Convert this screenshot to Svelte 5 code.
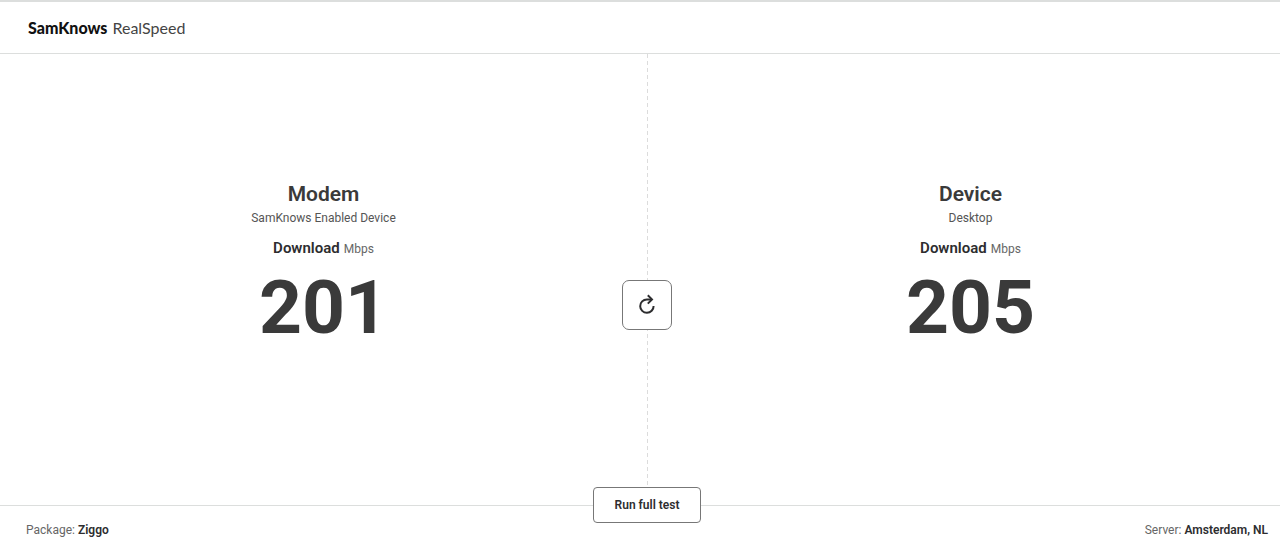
<script>
  const panels = [
    { name: 'Modem', detail: 'SamKnows Enabled Device', speed: 201 },
    { name: 'Device', detail: 'Desktop', speed: 205 }
  ];
</script>

<div class="viewport">
  <div class="page">
    <header>
      <a class="logo" href="#home"><strong>SamKnows</strong><span>RealSpeed</span></a>
    </header>

    <main>
      {#each panels as panel}
        <section class="panel">
          <h2>{panel.name}</h2>
          <p class="detail">{panel.detail}</p>
          <p class="metric"><strong>Download</strong><span>Mbps</span></p>
          <p class="speed">{panel.speed}</p>
        </section>
      {/each}
      <div class="divider">
        <button class="retry" aria-label="Run again">
          <svg viewBox="0 0 20 22" width="20" height="22" fill="none" stroke="currentColor" stroke-width="2" aria-hidden="true">
            <path d="M16.6 12A6.7 6.7 0 1 1 9.9 5.4H14.6" />
            <path d="M10.8 1.2L15 5.4L10.8 9.6" />
          </svg>
        </button>
      </div>
    </main>

    <footer>
      <p>Package: <strong>Ziggo</strong></p>
      <button class="full">Run full test</button>
      <p class="server">Server: <strong>Amsterdam, NL</strong></p>
    </footer>
  </div>
</div>

<style>
  .viewport {
    overflow: hidden;
    background: #fff;
  }
  .page {
    display: flex;
    flex-direction: column;
    box-sizing: border-box;
    min-height: 100vh;
    margin-right: -14px;
    border-top: 2px solid #dcdedd;
    color: #3a3a3a;
    font-family: Roboto, sans-serif;
    font-size: 12px;
    line-height: 16px;
  }
  p,
  h2 {
    margin: 0;
  }
  strong {
    font-weight: 600;
    color: #2d2d2f;
  }
  header {
    display: flex;
    align-items: center;
    height: 51px;
    padding: 0 28px;
    border-bottom: 1px solid #dcdedd;
  }
  .logo {
    display: flex;
    gap: 5px;
    color: #444;
    font-family: Lato, sans-serif;
    font-size: 16px;
    line-height: 24px;
    text-decoration: none;
  }
  .logo strong {
    font-weight: 900;
    color: #111;
  }
  main {
    position: relative;
    display: grid;
    grid-template-columns: 1fr 1fr;
    flex: 1;
    align-items: center;
  }
  .panel {
    text-align: center;
    padding-bottom: 32px;
  }
  h2 {
    font-size: 21px;
    font-weight: 600;
    line-height: 28px;
  }
  .detail {
    margin-top: 2px;
    color: #555;
  }
  .metric {
    display: flex;
    justify-content: center;
    align-items: baseline;
    gap: 4px;
    margin-top: 12px;
    line-height: 20px;
    color: #666;
  }
  .metric strong {
    font-size: 15px;
  }
  .speed {
    margin-top: 8px;
    font-size: 75px;
    font-weight: 700;
    line-height: 80px;
  }
  .divider {
    position: absolute;
    inset: 0;
    display: grid;
    place-items: center;
    padding-top: 50px;
    pointer-events: none;
    background: repeating-linear-gradient(to bottom, #dcdcdc 0 4px, transparent 4px 7px) center / 1px 100% no-repeat;
  }
  button {
    border: 1px solid #777;
    background: #fff;
    color: #2d2d2f;
    font-family: inherit;
    pointer-events: auto;
  }
  .retry {
    display: grid;
    place-items: center;
    width: 50px;
    height: 50px;
    padding: 0;
    border-radius: 7px;
  }
  footer {
    display: grid;
    grid-template-columns: 1fr auto 1fr;
    align-items: center;
    height: 39px;
    padding: 0 26px;
    border-top: 1px solid #dcdedd;
  }
  footer p {
    padding-top: 8px;
    color: #666;
  }
  .full {
    position: relative;
    top: -21px;
    height: 36px;
    padding: 0 21px;
    border-radius: 4px;
    font-size: 12px;
    font-weight: 600;
  }
  .server {
    text-align: right;
  }
</style>
